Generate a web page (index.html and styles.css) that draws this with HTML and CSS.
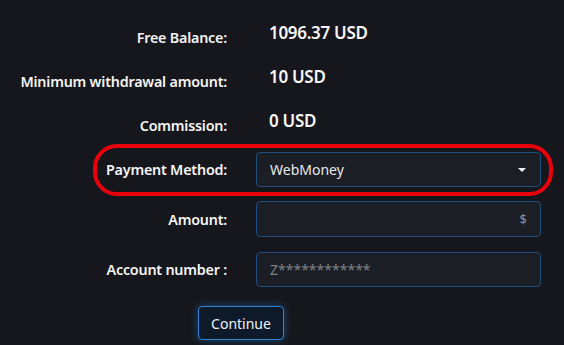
FILE: index.html
```html
<!DOCTYPE html>
<html lang="en">
<head>
  <meta charset="UTF-8">
  <title>Withdrawal</title>
  <link rel="stylesheet" href="styles.css">
</head>
<body>
  <div class="withdraw">
    <div class="row info">
      <div class="label">Free Balance:</div>
      <div class="value">1096.37 USD</div>
    </div>
    <div class="row info">
      <div class="label">Minimum withdrawal amount:</div>
      <div class="value">10 USD</div>
    </div>
    <div class="row info">
      <div class="label">Commission:</div>
      <div class="value">0 USD</div>
    </div>
    <div class="row field method">
      <div class="label">Payment Method:</div>
      <div class="control select">
        <span>WebMoney</span>
        <span class="caret"></span>
      </div>
      <div class="highlight"></div>
    </div>
    <div class="row field amount">
      <div class="label">Amount:</div>
      <div class="control input">
        <span class="suffix">$</span>
      </div>
    </div>
    <div class="row field account">
      <div class="label">Account number :</div>
      <div class="control input">
        <span class="placeholder">Z************</span>
      </div>
    </div>
    <div class="actions">
      <button class="btn-continue">Continue</button>
    </div>
  </div>
</body>
</html>
```

FILE: styles.css
```css
* { box-sizing: border-box; }
html, body {
  margin: 0;
  padding: 0;
  background: #16171c;
  font-family: 'Noto Sans', 'Open Sans', sans-serif;
  color: #f2f2f2;
  height: 345px;
  overflow: hidden;
}

.withdraw {
  padding-top: 13px;
  width: 541px;
}

.row {
  display: grid;
  grid-template-columns: 227px 285px;
  column-gap: 29px;
  align-items: center;
  position: relative;
}

.label {
  text-align: right;
  font-weight: 600;
  font-size: 14.3px;
  color: #f4f4f4;
  letter-spacing: -0.2px;
}

.info {
  height: 44px;
}
.info .label {
  padding-top: 5px;
}
.info .value {
  padding-left: 13px;
  padding-bottom: 5px;
  font-size: 17px;
  font-weight: 600;
  color: #f6f6f6;
  letter-spacing: -0.3px;
}

.method { margin-top: 7px; }
.amount { margin-top: 14px; }
.account { margin-top: 15px; }

.control {
  height: 35px;
  background: #1b1e25;
  border: 1px solid #1f4d7d;
  border-radius: 4px;
  padding: 0 13px;
  display: flex;
  align-items: center;
  font-size: 14px;
}
.amount .control { height: 36px; }

.select {
  justify-content: space-between;
  color: #e8e8e8;
}
.caret {
  width: 0;
  height: 0;
  border-left: 4px solid transparent;
  border-right: 4px solid transparent;
  border-top: 4px solid #f0f0f0;
  margin-right: 1px;
}

.input {
  justify-content: flex-end;
}
.suffix {
  color: #8c8f96;
  font-size: 13px;
}
.placeholder {
  margin-right: auto;
  color: #7e8086;
  font-size: 14px;
}

.highlight {
  position: absolute;
  left: 93px;
  right: -12px;
  top: -8px;
  bottom: -9px;
  border: 4px solid #e8000d;
  border-radius: 24px;
  pointer-events: none;
}

.actions {
  margin-top: 19px;
  padding-left: 198px;
}
.btn-continue {
  width: 86px;
  height: 34px;
  background: #0e1a29;
  border: 1px solid #2f84d6;
  border-radius: 4px;
  color: #eef2f6;
  font-family: 'Noto Sans', 'Open Sans', sans-serif;
  font-size: 14px;
  box-shadow: 0 0 8px rgba(40, 130, 230, 0.45);
  cursor: pointer;
}
```
